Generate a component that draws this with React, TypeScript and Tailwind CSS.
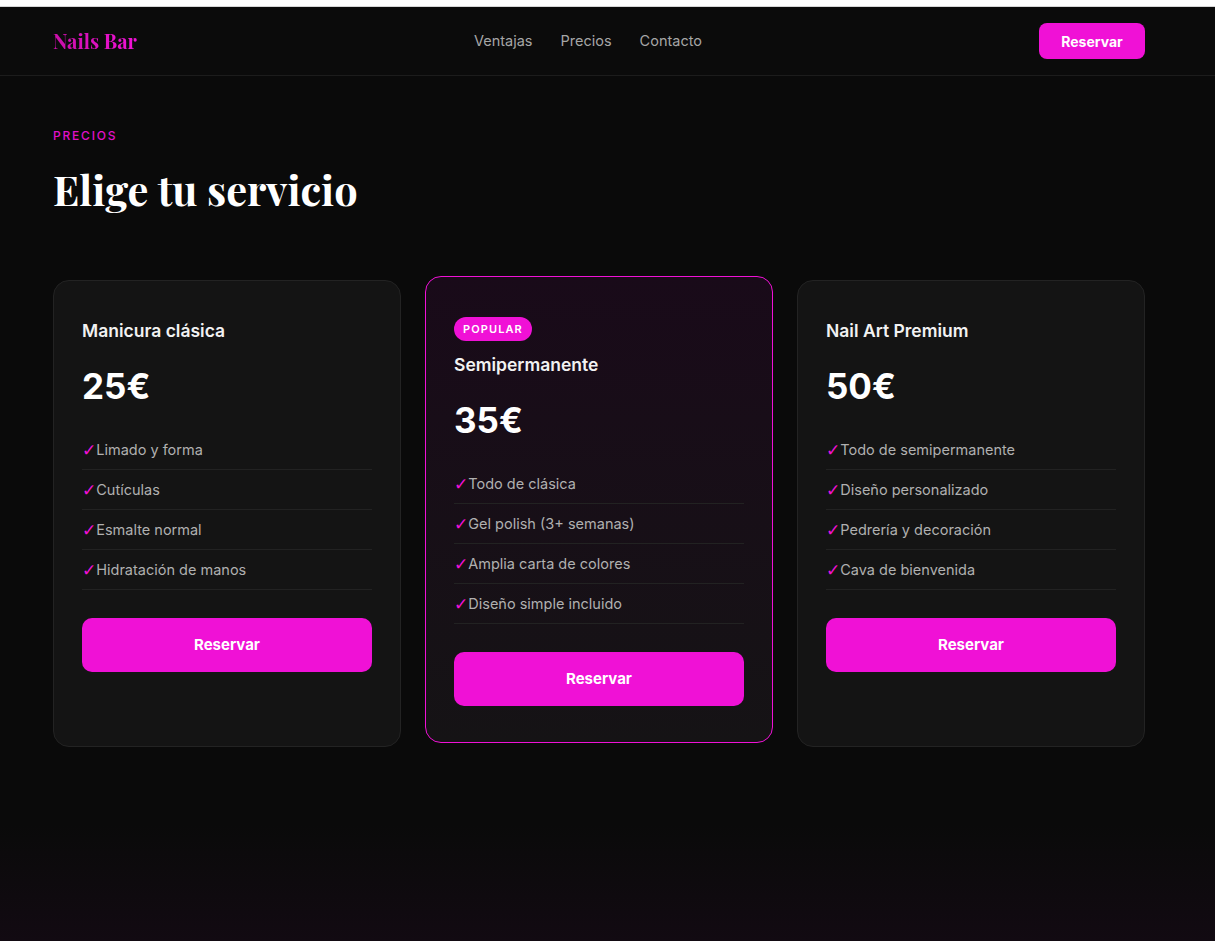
import { Fragment } from "react"

interface Plan {
  name: string
  price: string
  features: string[]
  popular?: boolean
}

const plans: Plan[] = [
  {
    name: "Manicura clásica",
    price: "25€",
    features: ["Limado y forma", "Cutículas", "Esmalte normal", "Hidratación de manos"],
  },
  {
    name: "Semipermanente",
    price: "35€",
    popular: true,
    features: ["Todo de clásica", "Gel polish (3+ semanas)", "Amplia carta de colores", "Diseño simple incluido"],
  },
  {
    name: "Nail Art Premium",
    price: "50€",
    features: ["Todo de semipermanente", "Diseño personalizado", "Pedrería y decoración", "Cava de bienvenida"],
  },
]

const serif = "font-['Playfair_Display','Liberation_Serif',serif]"

function Header() {
  return (
    <header className="h-[69px] border-b border-[#1c1c1c] bg-[#0b0b0b]">
      <div className="ml-[53px] flex h-full w-[1092px] items-center justify-between">
        <span
          className={`${serif} bg-gradient-to-r from-[#c90fa8] to-[#f212d8] bg-clip-text text-[20px] font-bold text-transparent`}
        >
          Nails Bar
        </span>
        <nav className="flex items-center gap-7 text-[14.5px] text-[#a6a6a6]">
          <a>Ventajas</a>
          <a>Precios</a>
          <a>Contacto</a>
        </nav>
        <button className="h-9 w-[106px] rounded-lg bg-[#f011d6] text-[14px] font-bold text-white">
          Reservar
        </button>
      </div>
    </header>
  )
}

function PlanCard({ plan }: { plan: Plan }) {
  return (
    <div
      className={
        plan.popular
          ? "-translate-y-1 rounded-2xl border border-[#f011d6] bg-gradient-to-b from-[#190a19] to-[#151315] px-7 pb-9 pt-9"
          : "rounded-2xl border border-[#232323] bg-[#141414] px-7 pb-9 pt-9"
      }
    >
      {plan.popular && (
        <span className="mb-2.5 mt-1 inline-flex h-6 items-center rounded-full bg-[#f011d6] px-[9px] text-[11px] font-semibold tracking-[0.1em] text-white">
          POPULAR
        </span>
      )}
      <h3 className="text-[17.5px] font-semibold leading-7 text-[#f2f2f2]">{plan.name}</h3>
      <div className="mb-6 mt-[21px] text-[35px] font-bold leading-10 text-white">{plan.price}</div>
      <ul>
        {plan.features.map((f) => (
          <li key={f} className="flex h-10 items-center border-b border-[#222222] text-[14.5px] text-[#b0b0b0]">
            <span className="font-['DejaVu_Sans',sans-serif] text-[17px] font-bold leading-5 text-[#f011d6]">✓</span>
            {f}
          </li>
        ))}
      </ul>
      <button className="mt-7 h-[54px] w-full rounded-[10px] bg-[#f011d6] text-[15px] font-bold text-white">
        Reservar
      </button>
    </div>
  )
}

export default function App() {
  return (
    <div className="flex min-h-[941px] flex-col bg-[#0a0a0a] font-['Inter','Liberation_Sans',sans-serif]">
      <div className="h-[7px] border-b border-[#d6d6d6] bg-white" />
      <Header />
      <section className="ml-[53px] w-[1092px] pt-[52px]">
        <p className="text-[12px] font-medium leading-4 tracking-[0.15em] text-[#e010c8]">PRECIOS</p>
        <h2 className={`${serif} mt-[18px] text-[41.5px] font-bold leading-[54px] text-white`}>Elige tu servicio</h2>
        <div className="mt-[64px] grid grid-cols-3 gap-6">
          {plans.map((p) => (
            <Fragment key={p.name}>
              <PlanCard plan={p} />
            </Fragment>
          ))}
        </div>
      </section>
      <div className="flex-1 bg-gradient-to-b from-[#0a0a0a] from-40% to-[#120a12]" />
    </div>
  )
}
